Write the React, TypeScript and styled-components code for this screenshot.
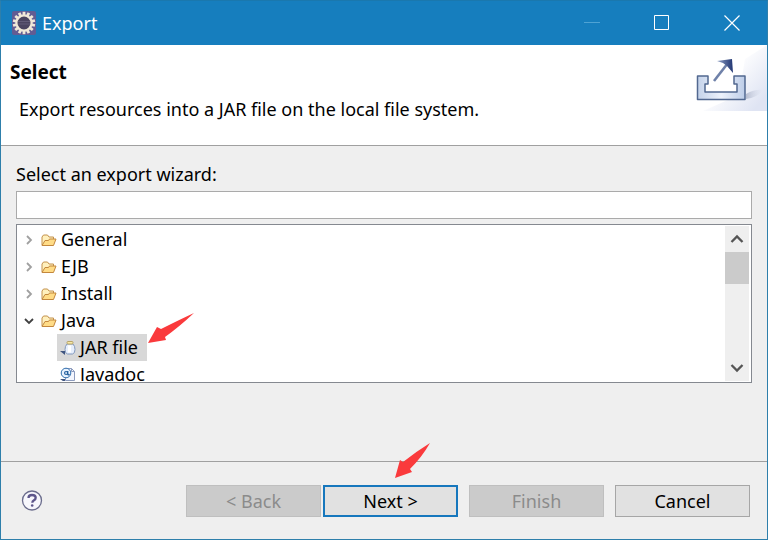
import React from "react";
import styled, { createGlobalStyle } from "styled-components";

const GlobalStyle = createGlobalStyle`
  *, *::before, *::after { box-sizing: border-box; }
  body { margin: 0; }
  button, input { font: inherit; color: inherit; }
`;

const Dialog = styled.div`
  display: flex;
  flex-direction: column;
  min-height: 100vh;
  border: 1px solid #2e7fab;
  border-top-color: #1a78ae;
  background: #efefef;
  color: #000;
  font-family: "Noto Sans", "Open Sans", sans-serif;
  font-size: 18px;
  line-height: 27px;
`;

const TitleBar = styled.header`
  display: flex;
  align-items: center;
  gap: 6px;
  height: 44px;
  padding-left: 10px;
  background: #167ebe;
  color: #fff;
`;

const WindowTitle = styled.span`
  flex: 1;
`;

const WindowControls = styled.div`
  display: flex;
`;

const WindowButton = styled.button`
  display: grid;
  place-items: center;
  width: 70px;
  height: 44px;
  padding: 0;
  border: 0;
  background: transparent;
  color: #fff;

  &:disabled { color: #4fa3d4; }
`;

const Banner = styled.section`
  display: flex;
  justify-content: space-between;
  min-height: 101px;
  border-bottom: 1px solid #a0a0a0;
  background: #fff;
`;

const BannerText = styled.div`
  padding: 14px 0 0 9px;
`;

const Heading = styled.h1`
  margin: 0;
  font-size: 19px;
  line-height: 27px;
  font-weight: 700;
`;

const Description = styled.p`
  margin: 10px 0 0 9px;
`;

const Content = styled.main`
  display: flex;
  flex-direction: column;
  flex: 1;
  padding: 15px 15px 0;
`;

const FilterLabel = styled.label`
  display: block;
  margin-bottom: 3px;
`;

const FilterInput = styled.input`
  width: 100%;
  height: 28px;
  padding: 0 4px;
  border: 1px solid #aaa;
  border-radius: 0;
  outline: 0;
  background: #fff;
`;

const TreeBox = styled.div`
  display: flex;
  height: 159px;
  margin-top: 5px;
  padding: 1px 2px 1px 1px;
  border: 1px solid #858990;
  background: #fff;
  overflow: hidden;
`;

const Tree = styled.ul`
  flex: 1;
  margin: 0;
  padding: 0 0 0 6px;
  list-style: none;
  overflow: hidden;
`;

const Group = styled.ul`
  margin: 0;
  padding: 0 0 0 33px;
  list-style: none;
`;

const Row = styled.div`
  display: flex;
  align-items: center;
  height: 27px;
`;

const Toggle = styled.button`
  display: grid;
  place-items: center;
  width: 10px;
  height: 16px;
  margin-right: 7px;
  padding: 0;
  border: 0;
  background: transparent;
`;

const RowText = styled.span`
  margin-left: 4px;
`;

const Leaf = styled.div<{ $selected?: boolean }>`
  position: relative;
  display: flex;
  align-items: center;
  width: max-content;
  min-width: 90px;
  height: 27px;
  padding: 0 4px 0 3px;
  background: ${(p) => (p.$selected ? "#d8d8d8" : "transparent")};
`;

const RowPointer = styled.svg`
  position: absolute;
  left: 100%;
  bottom: 17px;
`;

const ScrollBar = styled.div`
  display: flex;
  flex-direction: column;
  width: 24px;
  background: #efefef;
`;

const ScrollButton = styled.button`
  display: grid;
  place-items: center;
  height: 26px;
  padding: 0;
  border: 0;
  background: transparent;
`;

const ScrollTrack = styled.div`
  flex: 1;
`;

const ScrollThumb = styled.div`
  height: 32px;
  background: #cbcbcb;
`;

const Footer = styled.footer`
  display: flex;
  align-items: center;
  justify-content: space-between;
  height: 78px;
  padding: 0 17px 0 20px;
  border-top: 1px solid #a0a0a0;
`;

const HelpButton = styled.button`
  display: grid;
  place-items: center;
  width: 22px;
  height: 22px;
  padding: 0;
  border: 0;
  background: transparent;
`;

const Actions = styled.div`
  display: flex;
  gap: 11px;
`;

const Navigation = styled.div`
  display: flex;
  gap: 2px;
`;

const ActionSlot = styled.div`
  position: relative;
`;

const ActionButton = styled.button<{ $primary?: boolean }>`
  width: 135px;
  height: 32px;
  padding: 0;
  border: ${(p) => (p.$primary ? "2px solid #1677bd" : "1px solid #a6a6a6")};
  border-radius: 0;
  background: #e1e1e1;
  line-height: 24px;

  &:disabled {
    border-color: #bfbfbf;
    background: #cbcbcb;
    color: #8b8b8b;
  }
`;

const ButtonPointer = styled.svg`
  position: absolute;
  left: 72px;
  bottom: 38px;
  pointer-events: none;
`;

function GearIcon() {
  const teeth = Array.from({ length: 14 }, (_, i) => (i * 360) / 14);
  return (
    <svg width="25" height="25" viewBox="0 0 25 25" aria-hidden="true">
      <rect x="1" y="0" width="24" height="24" rx="2" fill="#625c93" />
      {teeth.map((a) => (
        <rect key={a} x="11.6" y="0.8" width="2.8" height="5" fill="#f0e8d8" transform={`rotate(${a} 13 12)`} />
      ))}
      <circle cx="13" cy="12" r="7.6" fill="#4b4460" stroke="#f0e8d8" strokeWidth="2.2" />
      <path d="M7 10.500h12M7 13h12" stroke="#625b78" strokeWidth="1" />
    </svg>
  );
}

function ExportIcon() {
  return (
    <svg width="72" height="66" viewBox="0 0 72 66" aria-hidden="true">
      <defs>
        <linearGradient id="sweep" x1="0.25" y1="0.1" x2="1" y2="0.75">
          <stop offset="0.3" stopColor="#fff" />
          <stop offset="1" stopColor="#dfe4f3" />
        </linearGradient>
        <linearGradient id="shade" x1="0" y1="0" x2="1" y2="0">
          <stop offset="0" stopColor="#a9b1c6" stopOpacity="0.8" />
          <stop offset="1" stopColor="#d4daea" stopOpacity="0" />
        </linearGradient>
        <linearGradient id="tray" x1="0" y1="0" x2="1" y2="0">
          <stop offset="0" stopColor="#c5d3ea" />
          <stop offset="0.5" stopColor="#edf2fb" />
          <stop offset="1" stopColor="#bdcde8" />
        </linearGradient>
        <linearGradient id="head" x1="0" y1="0" x2="1" y2="0">
          <stop offset="0" stopColor="#8fa0c4" />
          <stop offset="1" stopColor="#203572" />
        </linearGradient>
      </defs>
      <path d="M72 0L50 14 44 50 8 66H72Z" fill="url(#sweep)" />
      <path d="M51 54V49Q60 44 68 45Q62 53 51 54Z" fill="url(#shade)" />
      <path
        d="M2.500 31H13v8h-3v8h32v-8h-3v-8h11v23.500H2.500Z"
        fill="url(#tray)" stroke="#526890" strokeWidth="1.500" strokeLinejoin="round"
      />
      <path d="M19 36L33 18" stroke="#6f81a9" strokeWidth="2.600" />
      <path d="M22 16L37 14 38 28 32 21 28 18Z" fill="url(#head)" />
    </svg>
  );
}

function FolderIcon() {
  return (
    <svg width="16" height="14" viewBox="0 0 16 14" aria-hidden="true">
      <path d="M1 12V4l1.500-2h4L8 4h4.500v3" fill="#fff0bd" stroke="#c3914d" />
      <path d="M1 12.500L4 7.500h3.500l1-1.500h6.500l-2.500 6.500Z" fill="#ffdc87" stroke="#c3873d" strokeLinejoin="round" />
    </svg>
  );
}

function JarIcon() {
  return (
    <svg width="16" height="16" viewBox="0 0 16 16" aria-hidden="true">
      <path d="M7 4Q5 6 5 9.500 5 13.500 7.500 14h5q2.500-.5 2.500-4.500Q15 6 13 4Z" fill="#e6eefc" stroke="#8298bd" />
      <path d="M9.500 5.500v7" stroke="#fff" strokeWidth="3" />
      <rect x="7" y="1.500" width="6" height="2.500" rx="1" fill="#f8e8a6" stroke="#b7a469" />
      <path d="M0 11h5v4Z" fill="#405580" />
    </svg>
  );
}

function JavadocIcon() {
  return (
    <svg width="16" height="16" viewBox="0 0 16 16" aria-hidden="true">
      <path d="M5.500 1.500h6l3 3v9h-9Z" fill="#f3f6fd" stroke="#8c9bbd" />
      <path d="M11.500 1.500v3h3" fill="none" stroke="#8c9bbd" />
      <circle cx="6" cy="6" r="4.800" fill="#e8f2ff" stroke="#316fae" />
      <path d="M7.800 4v3.500q1 1 1.500-.5M7.600 6a1.500 1.500 0 1 1-3 0 1.500 1.500 0 0 1 3 0" fill="none" stroke="#205e9d" strokeWidth="1.200" />
      <path d="M0 12h5v3.500Z" fill="#405580" />
    </svg>
  );
}

function Chevron({ open }: { open: boolean }) {
  return (
    <svg width="10" height="10" viewBox="0 0 10 10" aria-hidden="true">
      {open ? (
        <path d="M1 3l4 4 4-4" fill="none" stroke="#404040" strokeWidth="1.800" />
      ) : (
        <path d="M3 1l4 4-4 4" fill="none" stroke="#a0a0a0" strokeWidth="1.800" />
      )}
    </svg>
  );
}

function ScrollArrow({ up }: { up?: boolean }) {
  return (
    <svg width="14" height="10" viewBox="0 0 14 10" aria-hidden="true">
      <path d={up ? "M1.500 8L7 2.500 12.500 8" : "M1.500 2L7 7.500 12.500 2"} fill="none" stroke="#555" strokeWidth="2.300" />
    </svg>
  );
}

const folders = [
  { name: "General", open: false },
  { name: "EJB", open: false },
  { name: "Install", open: false },
  { name: "Java", open: true },
];

export default function App() {
  return (
    <>
      <GlobalStyle />
      <Dialog role="dialog" aria-label="Export">
        <TitleBar>
          <GearIcon />
          <WindowTitle>Export</WindowTitle>
          <WindowControls>
            <WindowButton disabled aria-label="Minimize">
              <svg width="16" height="16" aria-hidden="true"><path d="M0 7.500h16" stroke="currentColor" /></svg>
            </WindowButton>
            <WindowButton aria-label="Maximize">
              <svg width="16" height="16" aria-hidden="true"><path d="M.5.5h14v14H.5Z" fill="none" stroke="currentColor" /></svg>
            </WindowButton>
            <WindowButton aria-label="Close">
              <svg width="16" height="16" aria-hidden="true"><path d="M.5.5l15 15m0-15l-15 15" stroke="currentColor" strokeWidth="1.200" /></svg>
            </WindowButton>
          </WindowControls>
        </TitleBar>
        <Banner>
          <BannerText>
            <Heading>Select</Heading>
            <Description>Export resources into a JAR file on the local file system.</Description>
          </BannerText>
          <ExportIcon />
        </Banner>
        <Content>
          <FilterLabel htmlFor="filter">Select an export wizard:</FilterLabel>
          <FilterInput id="filter" type="text" />
          <TreeBox>
            <Tree>
              {folders.map((f) => (
                <li key={f.name}>
                  <Row>
                    <Toggle aria-label={f.name} aria-expanded={f.open}><Chevron open={f.open} /></Toggle>
                    <FolderIcon />
                    <RowText>{f.name}</RowText>
                  </Row>
                  {f.open && (
                    <Group>
                      <li>
                        <Leaf $selected>
                          <JarIcon />
                          <RowText>JAR file</RowText>
                          <RowPointer width="48" height="31" viewBox="0 0 48 31" aria-hidden="true">
                            <path d="M47 0Q34 6 14 16L10 14 1 30 19 27 18 24Q32 14 47 0Z" fill="#fa3a3c" />
                          </RowPointer>
                        </Leaf>
                      </li>
                      <li>
                        <Leaf>
                          <JavadocIcon />
                          <RowText>Javadoc</RowText>
                        </Leaf>
                      </li>
                    </Group>
                  )}
                </li>
              ))}
            </Tree>
            <ScrollBar>
              <ScrollButton aria-label="Scroll up"><ScrollArrow up /></ScrollButton>
              <ScrollTrack><ScrollThumb /></ScrollTrack>
              <ScrollButton aria-label="Scroll down"><ScrollArrow /></ScrollButton>
            </ScrollBar>
          </TreeBox>
        </Content>
        <Footer>
          <HelpButton aria-label="Help">
            <svg width="22" height="22" viewBox="0 0 22 22" aria-hidden="true">
              <circle cx="11" cy="10.500" r="9.500" fill="#f7f7fc" stroke="#6a6c8c" strokeWidth="1.300" />
              <path d="M7.500 8q0-3 3.500-3 3.700 0 3.700 2.700 0 1.600-1.700 2.600-1.700 1-1.700 2.400" fill="none" stroke="#5d568b" strokeWidth="2.300" />
              <circle cx="11.200" cy="15.500" r="1.300" fill="#5d568b" />
            </svg>
          </HelpButton>
          <Actions>
            <Navigation>
              <ActionButton disabled>&lt; Back</ActionButton>
              <ActionSlot>
                <ActionButton $primary>Next &gt;</ActionButton>
                <ButtonPointer width="36" height="36" viewBox="0 0 36 36" aria-hidden="true">
                  <path d="M35 0Q22 8 8 19L5 17 0 35 17 29 15 26Q27 14 35 0Z" fill="#fa3a3c" />
                </ButtonPointer>
              </ActionSlot>
            </Navigation>
            <ActionButton disabled>Finish</ActionButton>
            <ActionButton>Cancel</ActionButton>
          </Actions>
        </Footer>
      </Dialog>
    </>
  );
}
